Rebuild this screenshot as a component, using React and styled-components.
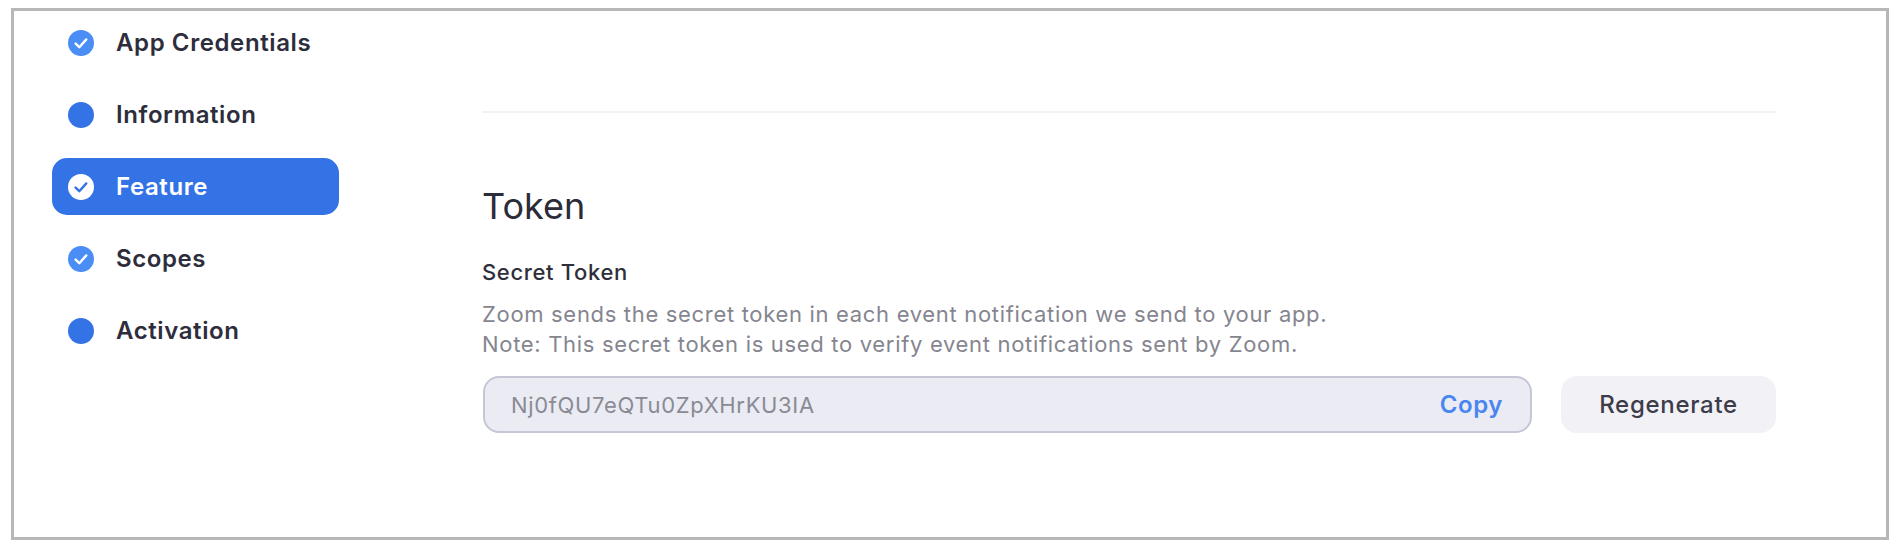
import React from 'react';
import styled, { createGlobalStyle } from 'styled-components';

const steps = [
  { label: 'App Credentials', done: true },
  { label: 'Information', done: false },
  { label: 'Feature', done: true, active: true },
  { label: 'Scopes', done: true },
  { label: 'Activation', done: false },
];

function StepIcon({ done, active }) {
  if (!done) return <Dot />;
  const fill = active ? '#ffffff' : '#4a8df5';
  const stroke = active ? '#3473e6' : '#ffffff';
  return (
    <IconSvg viewBox="0 0 26 26">
      <circle cx="13" cy="13" r="13" fill={fill} />
      <path d="M7.6 13.6l3.7 3.6 7-7.8" fill="none" stroke={stroke} strokeWidth="2.4" strokeLinecap="round" strokeLinejoin="round" />
    </IconSvg>
  );
}

export default function App() {
  return (
    <>
      <GlobalStyle />
      <Frame>
        <Sidebar>
          {steps.map((s) => (
            <StepItem key={s.label} $active={s.active}>
              <StepIcon done={s.done} active={s.active} />
              {s.label}
            </StepItem>
          ))}
        </Sidebar>
        <Main>
          <Rule />
          <Title>Token</Title>
          <FieldLabel>Secret Token</FieldLabel>
          <Hint>
            Zoom sends the secret token in each event notification we send to your app.
            <br />
            Note: This secret token is used to verify event notifications sent by Zoom.
          </Hint>
          <TokenRow>
            <TokenField>
              <TokenValue>Nj0fQU7eQTu0ZpXHrKU3IA</TokenValue>
              <CopyLink>Copy</CopyLink>
            </TokenField>
            <RegenButton>Regenerate</RegenButton>
          </TokenRow>
        </Main>
      </Frame>
    </>
  );
}

const GlobalStyle = createGlobalStyle`
  html, body {
    margin: 0;
    padding: 0;
    background: #ffffff;
    font-family: Inter, "Liberation Sans", sans-serif;
  }
`;

const Frame = styled.div`
  display: flex;
  box-sizing: border-box;
  width: 1878px;
  height: 532px;
  margin: 8px 0 0 11px;
  border: 3px solid #b7b7b7;
  background: #ffffff;
`;

const Sidebar = styled.nav`
  display: flex;
  flex-direction: column;
  gap: 15px;
  box-sizing: border-box;
  width: 469px;
  padding: 3px 0 0 38px;
`;

const StepItem = styled.div`
  display: flex;
  align-items: center;
  gap: 22.5px;
  box-sizing: border-box;
  width: 287px;
  height: 57px;
  padding-left: 15.5px;
  border-radius: 15px;
  font-size: 24px;
  font-weight: 600;
  letter-spacing: 0.6px;
  color: ${(p) => (p.$active ? '#ffffff' : '#2d2d3c')};
  background: ${(p) => (p.$active ? '#3473e6' : 'transparent')};
`;

const IconSvg = styled.svg`
  flex: none;
  width: 26px;
  height: 26px;
`;

const Dot = styled.span`
  flex: none;
  width: 26px;
  height: 26px;
  border-radius: 50%;
  background: #3473e6;
`;

const Main = styled.main`
  display: flex;
  flex-direction: column;
  width: 1294px;
  margin-left: -1px;
  padding-top: 100px;
`;

const Rule = styled.div`
  height: 2px;
  background: #f1f1f6;
`;

const Title = styled.h2`
  margin: 71px 0 0;
  font-size: 36px;
  line-height: 44px;
  font-weight: 400;
  color: #2b2b39;
`;

const FieldLabel = styled.div`
  margin-top: 29px;
  font-size: 22px;
  line-height: 30px;
  font-weight: 500;
  letter-spacing: 0.65px;
  color: #2f2f3b;
`;

const Hint = styled.p`
  margin: 12px 0 0;
  font-size: 22px;
  line-height: 30px;
  letter-spacing: 0.68px;
  color: #85858f;
`;

const TokenRow = styled.div`
  display: flex;
  gap: 29px;
  margin: 17px 0 0 1px;
`;

const TokenField = styled.div`
  display: flex;
  align-items: center;
  justify-content: space-between;
  box-sizing: border-box;
  width: 1049px;
  height: 57px;
  padding: 0 27px 0 26px;
  border: 2px solid #c5c6d6;
  border-radius: 16px;
  background: #ebecf3;
`;

const TokenValue = styled.span`
  font-size: 22px;
  letter-spacing: 0.65px;
  color: #8a8a96;
`;

const CopyLink = styled.span`
  font-size: 24px;
  font-weight: 600;
  letter-spacing: 0.6px;
  color: #4a86ef;
`;

const RegenButton = styled.button`
  box-sizing: border-box;
  width: 215px;
  height: 57px;
  border: none;
  border-radius: 16px;
  background: #f1f1f6;
  font-family: inherit;
  font-size: 24px;
  font-weight: 500;
  letter-spacing: 0.7px;
  color: #3c3c4a;
`;
